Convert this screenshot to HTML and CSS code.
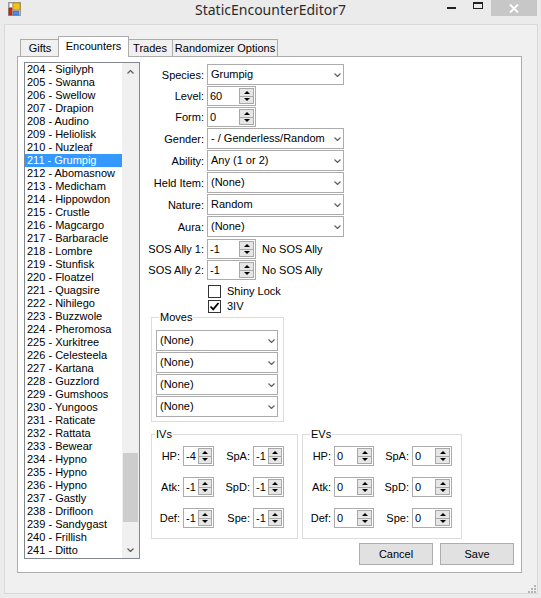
FILE: index.html
```html
<!DOCTYPE html>
<html lang="en">
<head>
    <meta charset="UTF-8">
    <title>StaticEncounterEditor7</title>
    <link rel="stylesheet" href="styles.css">
</head>
<body>
    <div class="titlebar">
        <div class="app-icon">
            <svg width="14" height="15" viewBox="0 0 14 15">
                <rect x="0.5" y="0.5" width="12" height="13" fill="#e4e4e4" stroke="#9a9a9a"/>
                <rect x="1.5" y="1.5" width="3" height="4" fill="#fff" stroke="#b0b0b0" stroke-width="0.6"/>
                <rect x="5" y="1" width="7" height="7" fill="#f2c11c" stroke="#c08a00" stroke-width="0.8"/>
                <rect x="1" y="6" width="3" height="7" fill="#d42a1c" stroke="#8a1a10" stroke-width="0.6"/>
                <rect x="5" y="9" width="6" height="4" fill="#4c8ee0" stroke="#2a5fb0" stroke-width="0.6"/>
            </svg>
        </div>
        <div class="title">StaticEncounterEditor7</div>
        <div class="win-buttons">
            <div class="btn-min"></div>
            <div class="btn-max"></div>
            <div class="btn-close">
                <svg width="10" height="9" viewBox="0 0 10 9"><path d="M1 0.5 L9 8.5 M9 0.5 L1 8.5" stroke="#fff" stroke-width="1.8"/></svg>
            </div>
        </div>
    </div>

    <div class="client">
        <div class="tabs">
            <div class="tab tab-gifts">Gifts</div>
            <div class="tab tab-encounters active">Encounters</div>
            <div class="tab tab-trades">Trades</div>
            <div class="tab tab-random">Randomizer Options</div>
        </div>

        <div class="panel">
            <div class="listbox">
                <div class="items">
                    <div>204 - Sigilyph</div>
                    <div>205 - Swanna</div>
                    <div>206 - Swellow</div>
                    <div>207 - Drapion</div>
                    <div>208 - Audino</div>
                    <div>209 - Heliolisk</div>
                    <div>210 - Nuzleaf</div>
                    <div class="selected">211 - Grumpig</div>
                    <div>212 - Abomasnow</div>
                    <div>213 - Medicham</div>
                    <div>214 - Hippowdon</div>
                    <div>215 - Crustle</div>
                    <div>216 - Magcargo</div>
                    <div>217 - Barbaracle</div>
                    <div>218 - Lombre</div>
                    <div>219 - Stunfisk</div>
                    <div>220 - Floatzel</div>
                    <div>221 - Quagsire</div>
                    <div>222 - Nihilego</div>
                    <div>223 - Buzzwole</div>
                    <div>224 - Pheromosa</div>
                    <div>225 - Xurkitree</div>
                    <div>226 - Celesteela</div>
                    <div>227 - Kartana</div>
                    <div>228 - Guzzlord</div>
                    <div>229 - Gumshoos</div>
                    <div>230 - Yungoos</div>
                    <div>231 - Raticate</div>
                    <div>232 - Rattata</div>
                    <div>233 - Bewear</div>
                    <div>234 - Hypno</div>
                    <div>235 - Hypno</div>
                    <div>236 - Hypno</div>
                    <div>237 - Gastly</div>
                    <div>238 - Drifloon</div>
                    <div>239 - Sandygast</div>
                    <div>240 - Frillish</div>
                    <div>241 - Ditto</div>
                </div>
                <div class="vscroll">
                    <div class="sb-btn">
                        <svg width="7" height="4" viewBox="0 0 7 4"><path d="M0.5 3.5 L3.5 0.5 L6.5 3.5" fill="none" stroke="#606060" stroke-width="1.3"/></svg>
                    </div>
                    <div class="sb-track"><div class="sb-thumb"></div></div>
                    <div class="sb-btn">
                        <svg width="7" height="4" viewBox="0 0 7 4"><path d="M0.5 0.5 L3.5 3.5 L6.5 0.5" fill="none" stroke="#606060" stroke-width="1.3"/></svg>
                    </div>
                </div>
            </div>

            <div class="editor">
                <div class="form">
                    <span class="lbl">Species:</span>
                    <div class="combo">Grumpig<svg class="chev" width="7" height="4" viewBox="0 0 7 4"><path d="M0.5 0.5 L3.5 3.5 L6.5 0.5" fill="none" stroke="#606060" stroke-width="1.2"/></svg></div>

                    <span class="lbl">Level:</span>
                    <div class="spin"><span class="val">60</span><span class="arrows"><i class="up"></i><i class="down"></i></span></div>

                    <span class="lbl">Form:</span>
                    <div class="spin"><span class="val">0</span><span class="arrows"><i class="up"></i><i class="down"></i></span></div>

                    <span class="lbl">Gender:</span>
                    <div class="combo">- / Genderless/Random<svg class="chev" width="7" height="4" viewBox="0 0 7 4"><path d="M0.5 0.5 L3.5 3.5 L6.5 0.5" fill="none" stroke="#606060" stroke-width="1.2"/></svg></div>

                    <span class="lbl">Ability:</span>
                    <div class="combo">Any (1 or 2)<svg class="chev" width="7" height="4" viewBox="0 0 7 4"><path d="M0.5 0.5 L3.5 3.5 L6.5 0.5" fill="none" stroke="#606060" stroke-width="1.2"/></svg></div>

                    <span class="lbl">Held Item:</span>
                    <div class="combo">(None)<svg class="chev" width="7" height="4" viewBox="0 0 7 4"><path d="M0.5 0.5 L3.5 3.5 L6.5 0.5" fill="none" stroke="#606060" stroke-width="1.2"/></svg></div>

                    <span class="lbl">Nature:</span>
                    <div class="combo">Random<svg class="chev" width="7" height="4" viewBox="0 0 7 4"><path d="M0.5 0.5 L3.5 3.5 L6.5 0.5" fill="none" stroke="#606060" stroke-width="1.2"/></svg></div>

                    <span class="lbl">Aura:</span>
                    <div class="combo">(None)<svg class="chev" width="7" height="4" viewBox="0 0 7 4"><path d="M0.5 0.5 L3.5 3.5 L6.5 0.5" fill="none" stroke="#606060" stroke-width="1.2"/></svg></div>

                    <span class="lbl sos-first">SOS Ally 1:</span>
                    <div class="with-note sos-first">
                        <div class="spin"><span class="val">-1</span><span class="arrows"><i class="up"></i><i class="down"></i></span></div>
                        <span class="note">No SOS Ally</span>
                    </div>

                    <span class="lbl">SOS Ally 2:</span>
                    <div class="with-note">
                        <div class="spin"><span class="val">-1</span><span class="arrows"><i class="up"></i><i class="down"></i></span></div>
                        <span class="note">No SOS Ally</span>
                    </div>

                    <div class="check first-check"><span class="box"></span>Shiny Lock</div>
                    <div class="check"><span class="box"><svg width="11" height="11" viewBox="0 0 11 11"><path d="M1.5 5.5 L4.2 8.3 L9.5 2" fill="none" stroke="#000" stroke-width="1.8"/></svg></span>3IV</div>
                </div>

                <fieldset class="group moves">
                    <legend>Moves</legend>
                    <div class="group-body">
                        <div class="combo">(None)<svg class="chev" width="7" height="4" viewBox="0 0 7 4"><path d="M0.5 0.5 L3.5 3.5 L6.5 0.5" fill="none" stroke="#606060" stroke-width="1.2"/></svg></div>
                        <div class="combo">(None)<svg class="chev" width="7" height="4" viewBox="0 0 7 4"><path d="M0.5 0.5 L3.5 3.5 L6.5 0.5" fill="none" stroke="#606060" stroke-width="1.2"/></svg></div>
                        <div class="combo">(None)<svg class="chev" width="7" height="4" viewBox="0 0 7 4"><path d="M0.5 0.5 L3.5 3.5 L6.5 0.5" fill="none" stroke="#606060" stroke-width="1.2"/></svg></div>
                        <div class="combo">(None)<svg class="chev" width="7" height="4" viewBox="0 0 7 4"><path d="M0.5 0.5 L3.5 3.5 L6.5 0.5" fill="none" stroke="#606060" stroke-width="1.2"/></svg></div>
                    </div>
                </fieldset>

                <div class="stat-groups">
                    <fieldset class="group ivs">
                        <legend>IVs</legend>
                        <div class="stats">
                            <span class="lbl">HP:</span>
                            <div class="spin"><span class="val">-4</span><span class="arrows"><i class="up"></i><i class="down"></i></span></div>
                            <span class="lbl">SpA:</span>
                            <div class="spin"><span class="val">-1</span><span class="arrows"><i class="up"></i><i class="down"></i></span></div>
                            <span class="lbl">Atk:</span>
                            <div class="spin"><span class="val">-1</span><span class="arrows"><i class="up"></i><i class="down"></i></span></div>
                            <span class="lbl">SpD:</span>
                            <div class="spin"><span class="val">-1</span><span class="arrows"><i class="up"></i><i class="down"></i></span></div>
                            <span class="lbl">Def:</span>
                            <div class="spin"><span class="val">-1</span><span class="arrows"><i class="up"></i><i class="down"></i></span></div>
                            <span class="lbl">Spe:</span>
                            <div class="spin"><span class="val">-1</span><span class="arrows"><i class="up"></i><i class="down"></i></span></div>
                        </div>
                    </fieldset>
                    <fieldset class="group evs">
                        <legend>EVs</legend>
                        <div class="stats">
                            <span class="lbl">HP:</span>
                            <div class="spin"><span class="val">0</span><span class="arrows"><i class="up"></i><i class="down"></i></span></div>
                            <span class="lbl">SpA:</span>
                            <div class="spin"><span class="val">0</span><span class="arrows"><i class="up"></i><i class="down"></i></span></div>
                            <span class="lbl">Atk:</span>
                            <div class="spin"><span class="val">0</span><span class="arrows"><i class="up"></i><i class="down"></i></span></div>
                            <span class="lbl">SpD:</span>
                            <div class="spin"><span class="val">0</span><span class="arrows"><i class="up"></i><i class="down"></i></span></div>
                            <span class="lbl">Def:</span>
                            <div class="spin"><span class="val">0</span><span class="arrows"><i class="up"></i><i class="down"></i></span></div>
                            <span class="lbl">Spe:</span>
                            <div class="spin"><span class="val">0</span><span class="arrows"><i class="up"></i><i class="down"></i></span></div>
                        </div>
                    </fieldset>
                </div>

                <div class="actions">
                    <button class="btn">Cancel</button>
                    <button class="btn">Save</button>
                </div>
            </div>
        </div>

        <div class="grip">
            <svg width="8" height="8" viewBox="0 0 8 8" fill="#b5b5b5">
                <rect x="6" y="0" width="2" height="2"/>
                <rect x="3" y="3" width="2" height="2"/><rect x="6" y="3" width="2" height="2"/>
                <rect x="0" y="6" width="2" height="2"/><rect x="3" y="6" width="2" height="2"/><rect x="6" y="6" width="2" height="2"/>
            </svg>
        </div>
    </div>
</body>
</html>
```

FILE: styles.css
```css
body {
    margin: 0;
    width: 541px;
    height: 598px;
    overflow: hidden;
    background: #ebebeb;
    font-family: "Liberation Sans", Arial, sans-serif;
    font-size: 11px;
    color: #000;
}

/* title bar */
.titlebar {
    height: 24px;
    display: grid;
    grid-template-columns: 1fr auto 1fr;
}
.app-icon {
    padding: 2px 0 0 8px;
}
.title {
    font-family: "Noto Sans", "Open Sans", sans-serif;
    font-size: 14px;
    line-height: 20px;
    color: #2b2b2b;
}
.win-buttons {
    display: flex;
    justify-content: flex-end;
    align-items: flex-start;
}
.btn-min {
    width: 9px;
    height: 2px;
    margin: 7px 17px 0 0;
    background: #222;
}
.btn-max {
    width: 10px;
    height: 7px;
    margin: 2px 8px 0 0;
    box-sizing: border-box;
    border: 1px solid #222;
    border-top-width: 2px;
}
.btn-close {
    width: 46px;
    height: 16px;
    margin-right: 4px;
    background: #c7c7c7;
    display: flex;
    align-items: center;
    justify-content: center;
}

/* client area */
.client {
    width: 534px;
    height: 570px;
    margin-left: 4px;
    box-sizing: border-box;
    border: 1px solid #d9d9d9;
    background: #f0f0f0;
    padding: 11px 0 0 12px;
}

.tabs {
    height: 20px;
    display: flex;
    align-items: flex-end;
    padding-left: 3px;
}
.tab {
    height: 17px;
    box-sizing: border-box;
    border: 1px solid #acacac;
    border-bottom: none;
    background: #f0f0f0;
    text-align: center;
    line-height: 16px;
}
.tab-gifts { width: 40px; }
.tab-encounters { width: 71px; margin-left: -2px; }
.tab-trades { width: 46px; margin-left: -2px; }
.tab-random { width: 106px; margin-left: -1px; }
.tab.active {
    height: 21px;
    margin-bottom: -1px;
    background: #fff;
    position: relative;
    z-index: 1;
    line-height: 19px;
}

.panel {
    width: 505px;
    height: 517px;
    box-sizing: border-box;
    border: 1px solid #acacac;
    background: #fff;
    display: flex;
    align-items: flex-start;
}

/* list box */
.listbox {
    width: 116px;
    height: 497px;
    margin: 5px 0 0 6px;
    box-sizing: border-box;
    border: 1px solid #828790;
    display: flex;
}
.items {
    flex: 1;
    overflow: hidden;
}
.items div {
    height: 13px;
    line-height: 13px;
    padding-left: 2px;
    white-space: nowrap;
}
.items .selected {
    background: #3399ff;
    color: #fff;
}
.vscroll {
    width: 17px;
    background: #f0f0f0;
    display: flex;
    flex-direction: column;
}
.sb-btn {
    height: 17px;
    display: flex;
    align-items: center;
    justify-content: center;
}
.sb-track {
    flex: 1;
}
.sb-thumb {
    height: 69px;
    margin: 373px 1px 0 1px;
    background: #cdcdcd;
}

/* editor */
.editor {
    width: 367px;
    margin-left: 8px;
    padding-top: 7px;
}
.form {
    display: grid;
    grid-template-columns: 56px auto;
    column-gap: 3px;
    row-gap: 1px;
    align-items: center;
}
.lbl {
    text-align: right;
    white-space: nowrap;
}
.sos-first {
    margin-top: 1px;
}

.combo {
    width: 137px;
    height: 21px;
    box-sizing: border-box;
    border: 1px solid #acacac;
    background: #fff;
    padding-left: 3px;
    line-height: 19px;
    display: flex;
    justify-content: space-between;
    align-items: center;
    white-space: nowrap;
}
.chev {
    margin-right: 2px;
    flex: none;
}

.spin {
    width: 49px;
    height: 20px;
    box-sizing: border-box;
    border: 1px solid #acacac;
    background: #fff;
    display: flex;
}
.spin .val {
    flex: 1;
    padding-left: 2px;
    line-height: 18px;
}
.spin .arrows {
    width: 15px;
    margin: 1px;
    display: flex;
    flex-direction: column;
}
.arrows i {
    flex: 1;
    box-sizing: border-box;
    border: 1px solid #a8a8a8;
    background: #e6e6e6;
    display: flex;
    align-items: center;
    justify-content: center;
}
.arrows i + i {
    border-top: none;
}
.arrows .up::before {
    content: "";
    border-left: 3px solid transparent;
    border-right: 3px solid transparent;
    border-bottom: 3px solid #000;
}
.arrows .down::before {
    content: "";
    border-left: 3px solid transparent;
    border-right: 3px solid transparent;
    border-top: 3px solid #000;
}

.with-note {
    display: flex;
    align-items: center;
    gap: 6px;
}

.check {
    grid-column: 2;
    height: 14px;
    display: flex;
    align-items: flex-end;
    gap: 6px;
    padding-left: 1px;
    line-height: 13px;
}
.first-check {
    margin-top: 3px;
}
.check .box {
    width: 13px;
    height: 13px;
    box-sizing: border-box;
    border: 1px solid #333;
    background: #fff;
    display: flex;
    align-items: center;
    justify-content: center;
}

/* group boxes */
.group {
    margin: 0;
    padding: 0;
    min-width: 0;
    border: 1px solid #dcdcdc;
    box-sizing: border-box;
}
.group legend {
    padding: 0 1px;
    line-height: 13px;
}
.moves {
    width: 133px;
    margin: -2px 0 0 3px;
}
.moves legend {
    margin-left: 7px;
}
.group-body {
    padding: 6px 5px 4px 4px;
    display: flex;
    flex-direction: column;
    gap: 1px;
}
.group-body .combo {
    width: 122px;
}

.stat-groups {
    display: flex;
    gap: 4px;
    margin: 6px 0 0 3px;
}
.ivs {
    width: 147px;
}
.ivs legend {
    margin-left: 3px;
}
.evs {
    width: 160px;
}
.evs legend {
    margin-left: 7px;
}
.stats {
    display: grid;
    column-gap: 3px;
    row-gap: 11px;
    grid-auto-rows: 20px;
    align-items: center;
    padding: 5px 0 10px 2px;
}
.ivs .stats {
    grid-template-columns: 26px 31px 33px 31px;
}
.evs .stats {
    grid-template-columns: 26px 40px 32px 40px;
}
.stats .spin {
    width: auto;
}
.ivs .spin .arrows {
    width: 14px;
}

.actions {
    display: flex;
    justify-content: flex-end;
    gap: 7px;
    margin: 4px 1px 0 0;
}
.btn {
    width: 74px;
    height: 22px;
    box-sizing: border-box;
    border: 1px solid #adadad;
    background: #e1e1e1;
    font-family: inherit;
    font-size: 11px;
    color: #000;
    padding: 0;
}

.grip {
    width: 8px;
    height: 8px;
    margin: 12px 0 0 511px;
    display: flex;
}
```
